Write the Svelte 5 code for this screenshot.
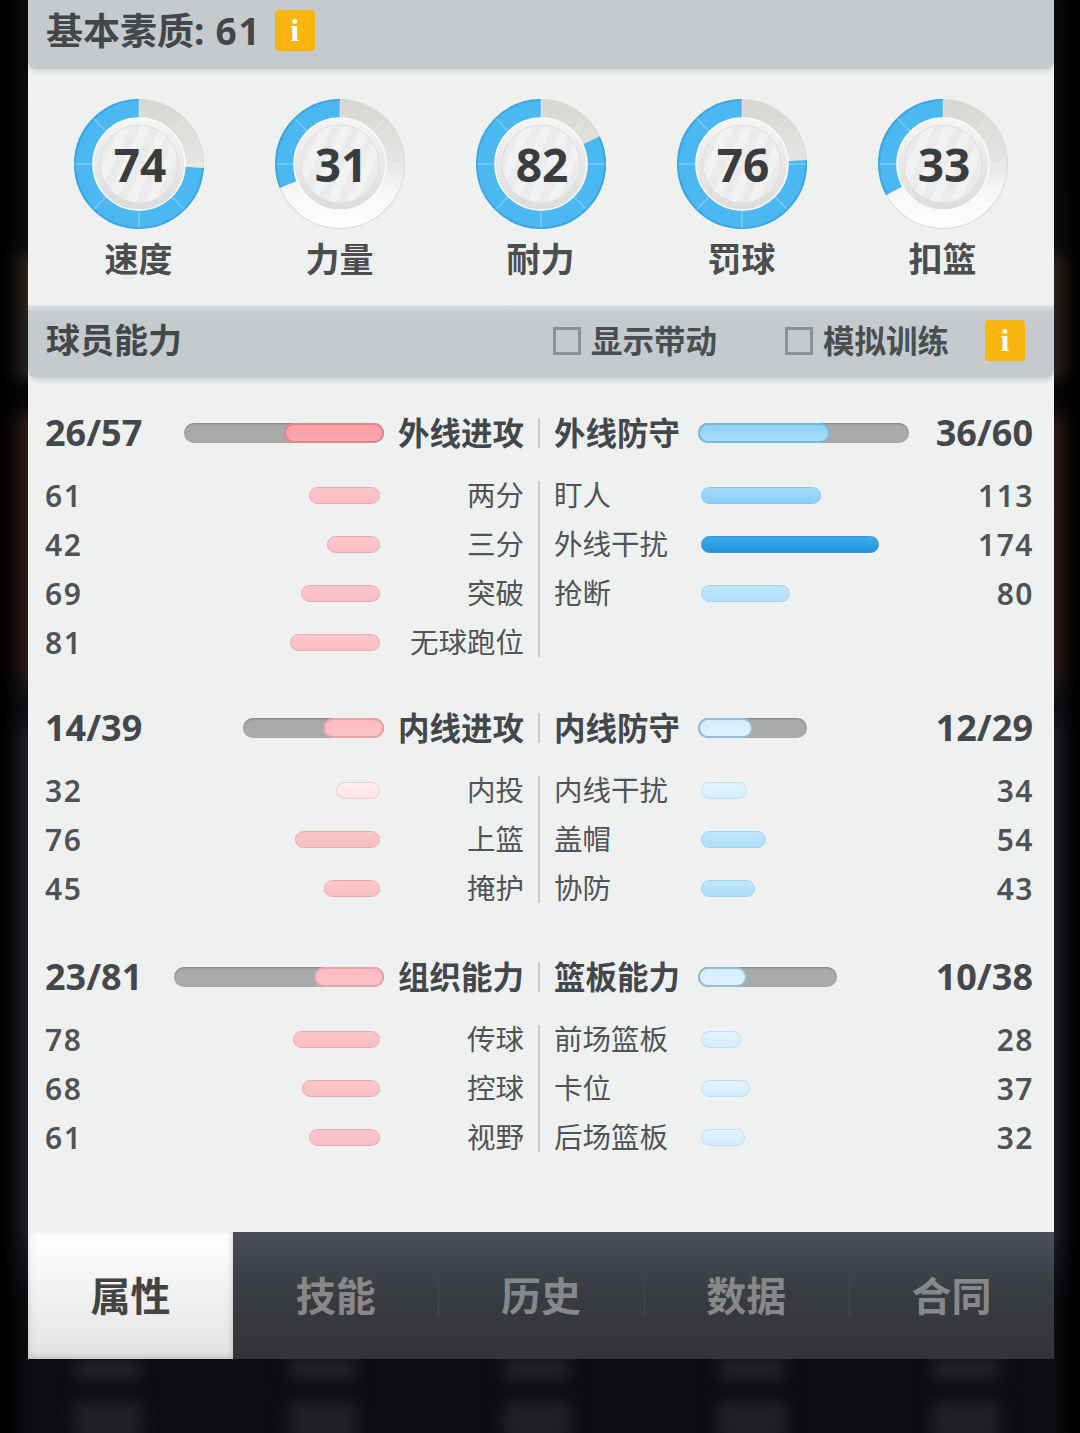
<script>
  const basics = [
    { name: "速度", value: 74 },
    { name: "力量", value: 31 },
    { name: "耐力", value: 82 },
    { name: "罚球", value: 76 },
    { name: "扣篮", value: 33 },
  ];

  const sections = [
    {
      left: {
        title: "外线进攻", score: "26/57", track: 200, fill: 100, tone: "strong",
        rows: [["两分", 61], ["三分", 42], ["突破", 69], ["无球跑位", 81]],
      },
      right: {
        title: "外线防守", score: "36/60", track: 211, fill: 132, tone: "strong",
        rows: [["盯人", 113], ["外线干扰", 174], ["抢断", 80]],
      },
    },
    {
      left: {
        title: "内线进攻", score: "14/39", track: 141, fill: 61, tone: "soft",
        rows: [["内投", 32], ["上篮", 76], ["掩护", 45]],
      },
      right: {
        title: "内线防守", score: "12/29", track: 109, fill: 55, tone: "soft",
        rows: [["内线干扰", 34], ["盖帽", 54], ["协防", 43]],
      },
    },
    {
      left: {
        title: "组织能力", score: "23/81", track: 210, fill: 70, tone: "soft",
        rows: [["传球", 78], ["控球", 68], ["视野", 61]],
      },
      right: {
        title: "篮板能力", score: "10/38", track: 139, fill: 49, tone: "soft",
        rows: [["前场篮板", 28], ["卡位", 37], ["后场篮板", 32]],
      },
    },
  ];

  const tabs = ["属性", "技能", "历史", "数据", "合同"];
  const ticks = [0, 45, 90, 135, 180, 225, 270, 315];
  const ghosts = [1, 2, 3, 4, 5];

  function barWidth(value) {
    return Math.round(14 + value * 0.94);
  }

  function tier(value) {
    if (value < 40) return "pale";
    if (value < 100) return "light";
    if (value < 150) return "mid";
    return "strong";
  }
</script>

<div class="page">
  <main class="panel">
    <header class="bar top-bar">
      <h2 class="basic-title">基本素质:<span class="basic-num">61</span></h2>
      <span class="info">i</span>
    </header>

    <section class="rings">
      {#each basics as item}
        <div class="ring-item">
          <div class="ring">
            <svg viewBox="0 0 130 130" width="130" height="130">
              <defs>
                <linearGradient id="rest" x1="0" y1="0" x2="0" y2="1">
                  <stop offset="0" stop-color="#d9d8d5" />
                  <stop offset="0.5" stop-color="#e6e6e4" />
                  <stop offset="0.75" stop-color="#f6f7f7" />
                  <stop offset="1" stop-color="#fbfcfc" />
                </linearGradient>
                <linearGradient id="disc" x1="0" y1="0" x2="0" y2="1">
                  <stop offset="0" stop-color="#f5f5f5" />
                  <stop offset="1" stop-color="#dcdcdc" />
                </linearGradient>
                <pattern id="stripes" width="18" height="18" patternUnits="userSpaceOnUse" patternTransform="rotate(25)">
                  <rect width="18" height="18" fill="#ebebeb" />
                  <rect width="9" height="18" fill="#f2f2f2" />
                </pattern>
              </defs>
              <circle cx="65" cy="65" r="65" fill="#d5d8d8" />
              <circle cx="65" cy="65" r="55" fill="none" stroke="url(#rest)" stroke-width="18" />
              <circle
                cx="65" cy="65" r="55" fill="none" stroke="#4cb8f1" stroke-width="18"
                pathLength="100" stroke-dasharray="{item.value} 100"
                transform="translate(130 0) scale(-1 1) rotate(-90 65 65)"
              />
              <circle
                cx="65" cy="65" r="64" fill="none" stroke="#3aa6e2" stroke-width="2"
                pathLength="100" stroke-dasharray="{item.value} 100"
                transform="translate(130 0) scale(-1 1) rotate(-90 65 65)"
              />
              {#each ticks as angle}
                <line x1="65" y1="1" x2="65" y2="19" stroke="#fff" stroke-opacity="0.25" stroke-width="1.5" transform="rotate({angle} 65 65)" />
              {/each}
              <circle cx="65" cy="65" r="46" fill="url(#disc)" stroke="#fbfbfb" stroke-width="1.5" />
              <circle cx="65" cy="65" r="39" fill="url(#stripes)" stroke="#dedede" stroke-width="1" />
            </svg>
            <span class="ring-value">{item.value}</span>
          </div>
          <div class="ring-name">{item.name}</div>
        </div>
      {/each}
    </section>

    <header class="bar mid-bar">
      <h2 class="ability-title">球员能力</h2>
      <div class="options">
        <label class="check check-a"><span class="box"></span>显示带动</label>
        <label class="check check-b"><span class="box"></span>模拟训练</label>
        <span class="info">i</span>
      </div>
    </header>

    <div class="stats">
      {#each sections as sec}
        <section class="sec">
          <div class="pair">
            <div class="col left">
              <div class="head-row">
                <span class="score">{sec.left.score}</span>
                <span class="track" style="width:{sec.left.track}px">
                  <span class="fill red {sec.left.tone}" style="width:{sec.left.fill}px"></span>
                </span>
                <span class="head-label">{sec.left.title}</span>
              </div>
            </div>
            <div class="col right">
              <div class="head-row">
                <span class="head-label">{sec.right.title}</span>
                <span class="track" style="width:{sec.right.track}px">
                  <span class="fill blue {sec.right.tone}" style="width:{sec.right.fill}px"></span>
                </span>
                <span class="score">{sec.right.score}</span>
              </div>
            </div>
          </div>
          <div class="pair rows">
            <div class="col left">
              {#each sec.left.rows as [label, value]}
                <div class="row">
                  <span class="num">{value}</span>
                  <span class="mini red {tier(value)}" style="width:{barWidth(value)}px"></span>
                  <span class="row-label">{label}</span>
                </div>
              {/each}
            </div>
            <div class="col right">
              {#each sec.right.rows as [label, value]}
                <div class="row">
                  <span class="row-label">{label}</span>
                  <span class="mini blue {tier(value)}" style="width:{barWidth(value)}px"></span>
                  <span class="num">{value}</span>
                </div>
              {/each}
            </div>
          </div>
        </section>
      {/each}
    </div>

    <nav class="tabs">
      {#each tabs as tab, i}
        <button class="tab" class:active={i === 0}><span class="tab-text">{tab}</span></button>
      {/each}
    </nav>
  </main>

  <div class="ghost" aria-hidden="true">
    {#each ghosts as g}
      <div class="ghost-col">
        <span class="ghost-a"></span>
        <span class="ghost-b"></span>
      </div>
    {/each}
  </div>
</div>

<style>
  :global(body) {
    margin: 0;
    background: #0a0b0e;
  }

  .page {
    width: 1080px;
    height: 1433px;
    overflow: hidden;
    padding: 0 26px 0 28px;
    box-sizing: border-box;
    background:
      linear-gradient(90deg, #000 0, rgba(0, 0, 0, 0.85) 8px, rgba(0, 0, 0, 0) 28px, rgba(0, 0, 0, 0) 1054px, rgba(0, 0, 0, 0.85) 1072px, #000 100%),
      linear-gradient(180deg, #0b0b0b 0, #0d0d0d 245px, #2a2320 265px, #2a2320 370px, #060606 388px, #0a0808 405px, #2b1a1a 425px, #2b1a1a 670px, #0f1016 705px, #1c1d28 740px, #1c1d28 1230px, #0b0c10 1300px, #0b0c10 100%);
    font-family: "Noto Sans", "Noto Sans CJK SC", sans-serif;
    color: #444;
  }

  .panel {
    position: relative;
    z-index: 1;
    height: 1359px;
    background: #eff1f1;
    display: flex;
    flex-direction: column;
  }

  .bar {
    display: flex;
    align-items: center;
    background: #c5cacd;
    border-radius: 0 0 8px 8px;
    box-shadow: 0 3px 5px rgba(0, 0, 0, 0.1);
    box-sizing: border-box;
  }

  h2 {
    margin: 0;
    font-family: "Noto Sans", "Noto Sans CJK SC", sans-serif;
    font-weight: 700;
    color: #43474a;
  }

  .top-bar {
    height: 69px;
    padding: 0 18px;
    gap: 13px;
  }

  .basic-title {
    font-size: 37px;
    line-height: 62px;
    margin-top: -7px;
    display: flex;
    align-items: baseline;
  }

  .basic-num {
    letter-spacing: 2px;
    margin-left: 11px;
  }

  .info {
    width: 40px;
    height: 41px;
    border-radius: 4px;
    background: #f8b50e;
    color: #fff;
    display: flex;
    align-items: center;
    justify-content: center;
    font-family: "Liberation Serif", serif;
    font-weight: 700;
    font-size: 32px;
    margin-top: -8px;
  }

  .rings {
    height: 236px;
    box-sizing: border-box;
    padding: 30px 0 0 10px;
    display: grid;
    grid-template-columns: repeat(5, 201px);
  }

  .ring-item {
    display: flex;
    flex-direction: column;
    align-items: center;
  }

  .ring {
    display: grid;
    width: 130px;
    height: 130px;
    place-items: center;
  }

  .ring svg,
  .ring-value {
    grid-area: 1 / 1;
  }

  .ring svg {
    display: block;
  }

  .ring-value {
    font-size: 46px;
    font-weight: 700;
    color: #3a3d40;
    position: relative;
    line-height: 1;
    padding-left: 3px;
  }

  .ring-name {
    margin-top: 6px;
    font-size: 34px;
    line-height: 46px;
    font-weight: 700;
    color: #4b4d4f;
    font-family: "Noto Sans CJK SC", sans-serif;
  }

  .mid-bar {
    height: 73px;
    padding: 0 29px 0 18px;
    justify-content: space-between;
    background: linear-gradient(180deg, #dfe2e3 0, #c8cccf 7px, #c5cacd 14px);
  }

  .ability-title {
    font-size: 34px;
    line-height: 46px;
    margin-top: -4px;
  }

  .options {
    display: flex;
    align-items: center;
  }

  .check {
    display: flex;
    align-items: center;
    gap: 10px;
    font-size: 31.5px;
    line-height: 44px;
    font-weight: 700;
    color: #4a4e51;
    font-family: "Noto Sans CJK SC", sans-serif;
  }

  .check-a {
    margin-left: 1px;
    margin-top: -6px;
  }

  .check-b {
    margin-left: 68px;
    margin-right: 36px;
    margin-top: -6px;
  }

  .box {
    width: 28px;
    height: 28px;
    box-sizing: border-box;
    border: 3px solid #8b9094;
    margin-top: 5px;
  }

  .mid-bar .info {
    margin-top: -2px;
  }

  .stats {
    flex: 1;
    padding-top: 40px;
  }

  .sec + .sec {
    margin-top: 56px;
  }

  .sec:last-child {
    margin-top: 59px;
  }

  .pair {
    display: grid;
    grid-template-columns: 512px 1fr;
  }

  .rows {
    margin-top: 33px;
  }

  .col {
    box-sizing: border-box;
  }

  .col.left {
    padding: 0 14px 0 17px;
    border-right: 2px solid #c9cbcb;
  }

  .col.right {
    padding: 0 21px 0 14px;
  }

  .rows .col {
    display: flex;
    flex-direction: column;
    gap: 20px;
  }

  .head-row,
  .row {
    display: flex;
    align-items: center;
  }

  .head-row {
    height: 30px;
  }

  .row {
    height: 29px;
  }

  .score {
    font-size: 36px;
    font-weight: 700;
    color: #45484a;
    line-height: 30px;
  }

  .head-label {
    width: 126px;
    font-size: 31.5px;
    line-height: 30px;
    font-weight: 700;
    color: #43464a;
    font-family: "Noto Sans CJK SC", sans-serif;
    flex: none;
    margin-bottom: 4px;
  }

  .left .head-label {
    margin-left: 14px;
  }

  .right .head-label {
    margin-right: 18px;
  }

  .left .track {
    margin-left: auto;
  }

  .right .score {
    margin-left: auto;
  }

  .track {
    height: 20px;
    border-radius: 10px;
    background: #a9abab;
    box-shadow: inset 0 1px 2px rgba(0, 0, 0, 0.25);
    display: flex;
    flex: none;
  }

  .left .track {
    justify-content: flex-end;
  }

  .fill {
    height: 20px;
    border-radius: 10px;
    box-sizing: border-box;
  }

  .fill.red.strong {
    background: linear-gradient(180deg, #fb9ea4, #f9a9ae);
    border: 2px solid #e3868b;
  }

  .fill.red.soft {
    background: linear-gradient(180deg, #fcbcc0, #fcc4c7);
    border: 2px solid #e9a4a8;
  }

  .fill.blue.strong {
    background: linear-gradient(180deg, #8fd2f8, #a9def9);
    border: 2px solid #76b9e0;
  }

  .fill.blue.soft {
    background: linear-gradient(180deg, #d3edfc, #dff2fd);
    border: 2px solid #93bdd6;
  }

  .num {
    font-size: 30px;
    font-weight: 600;
    color: #505355;
    line-height: 29px;
    letter-spacing: 1.5px;
  }

  .row-label {
    font-size: 28.5px;
    line-height: 29px;
    color: #515456;
    font-family: "Noto Sans CJK SC", sans-serif;
    flex: none;
    margin-bottom: 4px;
  }

  .left .row-label {
    width: 144px;
    text-align: right;
  }

  .right .row-label {
    width: 147px;
  }

  .left .mini {
    margin-left: auto;
  }

  .right .num {
    margin-left: auto;
    margin-right: -1px;
  }

  .mini {
    height: 17px;
    border-radius: 9px;
    box-sizing: border-box;
    flex: none;
  }

  .mini.red.light {
    background: linear-gradient(180deg, #fcc6ca, #f9c0c4);
    border: 1px solid #efa8ad;
  }

  .mini.red.pale {
    background: linear-gradient(180deg, #fff0f0, #fde2e3);
    border: 1px solid #f2cdcf;
  }

  .mini.blue.pale {
    background: linear-gradient(180deg, #e4f4fd, #d4edfb);
    border: 1px solid #bbe0f5;
  }

  .mini.blue.light {
    background: linear-gradient(180deg, #c2e7fc, #afdefa);
    border: 1px solid #9dd4f4;
  }

  .mini.blue.mid {
    background: linear-gradient(180deg, #a4dcfc, #8acdf5);
    border: 1px solid #7fc6f1;
  }

  .mini.blue.strong {
    background: linear-gradient(180deg, #3eabea, #2294dc);
    border: 1px solid #2b9ae0;
  }

  .tabs {
    height: 127px;
    display: grid;
    grid-template-columns: repeat(5, 1fr);
    background: linear-gradient(180deg, #4b4e56 0, #3a3c43 45%, #313338 100%);
  }

  .tab {
    border: 0;
    padding: 0;
    margin: 0;
    background: none;
    display: flex;
    align-items: center;
    justify-content: center;
    font-family: "Noto Sans CJK SC", sans-serif;
    font-size: 40px;
    font-weight: 700;
    color: #87888a;
  }

  .tab:nth-child(n + 3) {
    background: linear-gradient(#46484f, #46484f) left center / 1px 40px no-repeat;
  }

  .tab.active {
    color: #434343;
    background: linear-gradient(180deg, #fff 0, #f4f4f4 40%, #e2e2e2 100%);
    box-shadow: inset 0 -4px 5px rgba(0, 0, 0, 0.08), inset -4px 0 5px rgba(0, 0, 0, 0.06), inset 4px 0 5px rgba(0, 0, 0, 0.04);
  }

  .tab-text {
    line-height: 50px;
    margin-bottom: 4px;
  }

  .ghost {
    display: grid;
    grid-template-columns: repeat(5, 214.5px);
    margin-left: -27px;
    height: 74px;
    filter: blur(8px);
  }

  .ghost-col {
    display: flex;
    flex-direction: column;
    align-items: center;
    gap: 22px;
  }

  .ghost-a {
    width: 68px;
    height: 20px;
    background: #232428;
  }

  .ghost-b {
    width: 68px;
    height: 40px;
    background: #212225;
  }
</style>
